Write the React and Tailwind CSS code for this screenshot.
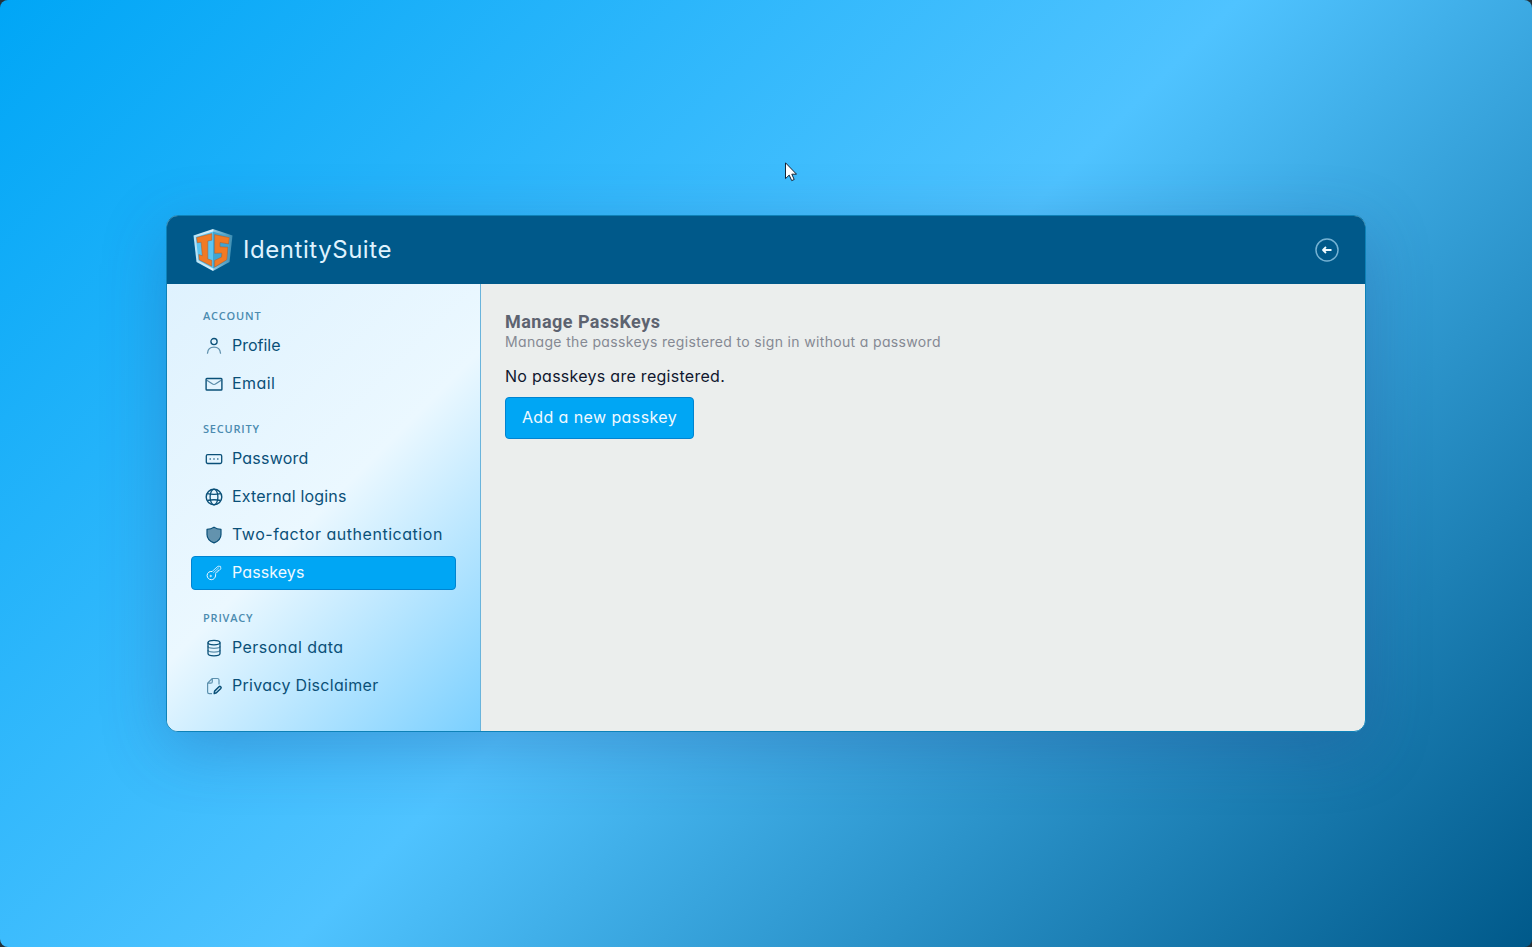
import { useId } from "react";

function ProfileIcon() {
  return (
    <svg viewBox="0 0 18 18" className="size-[18px]" fill="none" stroke="currentColor" strokeLinecap="round">
      <circle cx="9" cy="4.6" r="3.1" strokeWidth="1.3" />
      <path d="M2.500 16.200c.3-3.700 2.600-6 6.500-6s6.200 2.300 6.500 6" strokeWidth="1.3" opacity=".6" />
    </svg>
  );
}

function EmailIcon() {
  return (
    <svg viewBox="0 0 18 18" className="size-[18px]" fill="none" stroke="currentColor">
      <rect x="1.100" y="3.500" width="15.800" height="11.500" rx=".8" strokeWidth="1.4" />
      <path d="M1.800 5.300 7.600 9.100q1.400.8 2.800 0l5.800-3.800" strokeWidth="1.2" opacity=".65" />
    </svg>
  );
}

function PasswordIcon() {
  return (
    <svg viewBox="0 0 18 18" className="size-[18px]" fill="none" stroke="currentColor">
      <rect x="1.300" y="4.600" width="15.400" height="8.900" rx="1.400" strokeWidth="1.3" />
      <path d="M4.500 9h1.500M8.250 9h1.500M12 9h1.500" strokeWidth="1.6" opacity=".75" />
    </svg>
  );
}

function GlobeIcon() {
  return (
    <svg viewBox="0 0 18 18" className="size-[18px]" fill="none" stroke="currentColor" strokeWidth="1.3">
      <circle cx="9" cy="9" r="7.800" strokeWidth="1.400" />
      <ellipse cx="9" cy="9" rx="3.900" ry="7.800" />
      <path d="M2.200 5.700Q9 7.200 15.800 5.700M2.200 12.500Q9 11 15.800 12.500" />
    </svg>
  );
}

function ShieldIcon() {
  return (
    <svg viewBox="0 0 18 18" className="size-[18px]" stroke="currentColor" strokeWidth="1.200" strokeLinejoin="round">
      <path
        d="M9 1.200c2.100 1.400 4.400 2 7 2.200v5c0 3.800-2.700 6.700-7 8.500-4.300-1.800-7-4.700-7-8.500v-5c2.600-.2 4.900-.8 7-2.200Z"
        fill="currentColor"
        fillOpacity=".6"
      />
    </svg>
  );
}

function KeyIcon() {
  return (
    <svg viewBox="0 0 18 18" className="size-[18px]" fill="none" stroke="currentColor" strokeWidth="1" strokeLinejoin="round">
      <path d="M7.100 7.500 13 2.200l2.600.2.200 2.500-1.400 1.400-1.400.1-.1 1.500-1.500.1-.8 1.600" opacity=".8" />
      <path d="M7.100 7.500c-2.500-.5-4.900 1.200-5 3.900 0 2.400 1.900 4.300 4.200 4.300 2.900 0 4.700-2.700 4.300-6.100" />
      <path d="m8.300 8.800 5.500-5.100" opacity=".7" />
      <circle cx="5.700" cy="12" r=".7" />
    </svg>
  );
}

function DatabaseIcon() {
  return (
    <svg viewBox="0 0 18 18" className="size-[18px]" fill="none" stroke="currentColor" strokeWidth="1.300">
      <ellipse cx="9" cy="3.600" rx="6" ry="2.300" />
      <path d="M3 3.600v10.900c0 1.300 2.700 2.300 6 2.300s6-1 6-2.300V3.600" />
      <path d="M3 7.300c0 1.300 2.700 2.100 6 2.100s6-.8 6-2.100M3 11c0 1.300 2.700 2.100 6 2.100s6-.8 6-2.100" opacity=".6" />
    </svg>
  );
}

function DisclaimerIcon() {
  return (
    <svg viewBox="0 0 18 18" className="size-[18px]" fill="none" stroke="currentColor" strokeLinejoin="round">
      <path d="M7 16.600H4.200q-1.600 0-1.600-1.600V6.200l4.700-4.700h5.100q1.600 0 1.600 1.600v4.300M7.300 1.500v3.200q0 1.500-1.500 1.500H2.600" strokeWidth="1.200" opacity=".6" />
      <path d="m9.200 16.600.4-2.500 4.400-4.300q.8-.8 1.700 0t.1 1.700l-4.400 4.300Z" strokeWidth="1.500" />
    </svg>
  );
}

function Logo() {
  const id = useId();
  return (
    <svg viewBox="0 0 40 44" className="h-11 w-10">
      <defs>
        <linearGradient id={id} x1="0" x2="1">
          <stop offset="0" stopColor="#b4e2f6" />
          <stop offset=".5" stopColor="#d8f0fa" />
          <stop offset=".52" stopColor="#8bc5df" />
          <stop offset="1" stopColor="#3d8eb2" />
        </linearGradient>
      </defs>
      <path d="M20 1 39.500 7.500 36.500 34 20 43 3.500 34 .5 7.500Z" fill={`url(#${id})`} />
      <path d="M20 3.500 2.800 9 5.500 32.500 20 40.500Z" fill="#5cc5f1" />
      <path d="M20 3.500 37.200 9 34.500 32.500 20 40.500Z" fill="#3fa5d3" />
      <g fill="#f27a24" stroke="#a65c35" strokeWidth=".5">
        <path d="M3.600 9.500 18.800 5.600v6.600l-4 .8v18l4 1.300v6L6.200 31.800 5.800 26.500l3.500 1.300-1.200-13.600-3.800.6Z" />
        <path d="m21.600 6.600 14.800 3-.8 6.300-8.600-1.400v4.300l7.900.4-1 12.500-12.300 7.500v-6.700l6.900-3.400.3-4-7.200.2Z" />
      </g>
    </svg>
  );
}

const sections = [
  {
    title: "ACCOUNT",
    items: [
      { label: "Profile", icon: ProfileIcon, tracking: "tracking-[0]" },
      { label: "Email", icon: EmailIcon, tracking: "tracking-[0.45px]" },
    ],
  },
  {
    title: "SECURITY",
    items: [
      { label: "Password", icon: PasswordIcon, tracking: "tracking-[0.22px]" },
      { label: "External logins", icon: GlobeIcon, tracking: "tracking-[0.17px]" },
      { label: "Two-factor authentication", icon: ShieldIcon, tracking: "tracking-[0.53px]" },
      { label: "Passkeys", icon: KeyIcon, tracking: "tracking-[0.1px]", active: true },
    ],
  },
  {
    title: "PRIVACY",
    items: [
      { label: "Personal data", icon: DatabaseIcon, tracking: "tracking-[0.45px]" },
      { label: "Privacy Disclaimer", icon: DisclaimerIcon, tracking: "tracking-[0.3px]" },
    ],
  },
];

function NavItem({ item }) {
  const Icon = item.icon;
  return (
    <a
      className={`flex h-[34px] items-center gap-[9px] rounded border pl-[13px] text-base ${
        item.active ? "border-[#0084d1] bg-[#00a6f4] text-[#f0f9ff]" : "border-transparent text-[#0a5078]"
      }`}
    >
      <Icon />
      <span className={`whitespace-nowrap pb-0.5 ${item.tracking}`}>{item.label}</span>
    </a>
  );
}

function Sidebar() {
  return (
    <nav className="w-[314px] shrink-0 border-r border-[#69b4dc] bg-[linear-gradient(135deg,#dff2fe_0%,#ebf8ff_50%,#7bd0ff_100%)] px-6 pt-1">
      {sections.map((section) => (
        <div key={section.title}>
          <h2 className="h-[41px] pl-3 pt-5 font-['Open_Sans',sans-serif] text-[11px] font-semibold leading-4 tracking-[0.8px] text-[#4b8bb0]">
            {section.title}
          </h2>
          <div className="flex flex-col gap-1">
            {section.items.map((item) => (
              <NavItem key={item.label} item={item} />
            ))}
          </div>
        </div>
      ))}
    </nav>
  );
}

export default function App() {
  return (
    <div className="h-screen w-full overflow-hidden bg-[#24323a] font-[Inter,sans-serif] [font-feature-settings:'cv11']">
      <div className="relative flex h-full items-center justify-center rounded-lg bg-[linear-gradient(135deg,#00a6f6_0%,#4fc3ff_50%,#00598a_100%)]">
        <main className="flex h-[517px] w-[1200px] flex-col overflow-hidden rounded-xl border border-[#0e82b8] bg-[#ebeeed] shadow-[0_16px_64px_rgba(42,70,140,0.3)]">
          <header className="flex h-[68px] shrink-0 items-center justify-between bg-[#00598a] pl-[26px] pr-[26px]">
            <div className="flex items-center gap-[10px]">
              <Logo />
              <span className="text-2xl tracking-[0.55px] text-[#dff2fe]">IdentitySuite</span>
            </div>
            <svg viewBox="0 0 24 24" className="size-6" fill="none">
              <circle cx="12" cy="12" r="11" stroke="#75b2d3" strokeWidth="1.500" />
              <path d="M16.500 12H8M11 9l-3 3 3 3" stroke="#effaff" strokeWidth="1.800" strokeLinejoin="round" />
            </svg>
          </header>

          <div className="flex grow">
            <Sidebar />
            <section className="flex grow flex-col items-start pl-6 pt-7">
              <h1 className="font-[Roboto,sans-serif] text-lg font-bold leading-5 tracking-[0.47px] text-[#5d6370]">
                Manage PassKeys
              </h1>
              <p className="text-sm leading-5 tracking-[0.34px] text-[#858993]">
                Manage the passkeys registered to sign in without a password
              </p>
              <p className="mt-3 text-base leading-6 tracking-[0.28px] text-[#10172f]">No passkeys are registered.</p>
              <button className="mt-[9px] flex h-[42px] w-[189px] items-center justify-center rounded border border-[#0084d1] bg-[#00a6f4] pb-0.5 text-base tracking-[0.4px] text-[#f0f9ff]">
                Add a new passkey
              </button>
            </section>
          </div>
        </main>

        <svg viewBox="0 0 12 20" className="absolute left-[785px] top-[162px] h-5 w-3">
          <path d="M.5.8v15.800l3.700-3.500 2.500 5.500 2.500-1.100-2.400-5.300h4.700Z" fill="white" stroke="#142536" strokeWidth="1" />
        </svg>
      </div>
    </div>
  );
}
